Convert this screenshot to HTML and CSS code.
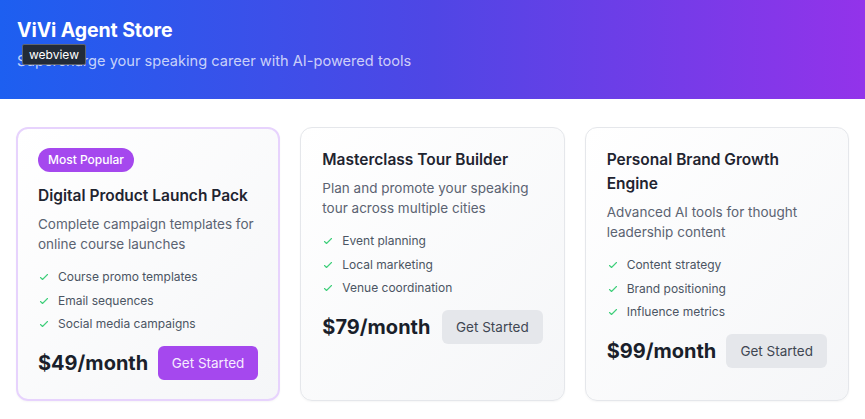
FILE: index.html
```html
<!DOCTYPE html>
<html lang="en">
<head>
<meta charset="utf-8">
<title>ViVi Agent Store</title>
<link rel="stylesheet" href="styles.css">
</head>
<body>
<header class="hero">
  <h1 class="hero-title">ViVi Agent Store</h1>
  <p class="hero-sub">Supercharge your speaking career with AI-powered tools</p>
  <span class="tooltip">webview</span>
</header>
<main class="grid">
  <div class="card card-featured">
    <span class="badge">Most Popular</span>
    <h2 class="card-title">Digital Product Launch Pack</h2>
    <p class="card-desc">Complete campaign templates for online course launches</p>
    <ul class="features">
      <li><svg class="check" viewBox="0 0 24 24"><path d="M5 13l4 4L19 7"/></svg>Course promo templates</li>
      <li><svg class="check" viewBox="0 0 24 24"><path d="M5 13l4 4L19 7"/></svg>Email sequences</li>
      <li><svg class="check" viewBox="0 0 24 24"><path d="M5 13l4 4L19 7"/></svg>Social media campaigns</li>
    </ul>
    <div class="card-foot">
      <span class="price">$49/month</span>
      <button class="btn btn-primary">Get Started</button>
    </div>
  </div>
  <div class="card">
    <h2 class="card-title">Masterclass Tour Builder</h2>
    <p class="card-desc">Plan and promote your speaking tour across multiple cities</p>
    <ul class="features">
      <li><svg class="check" viewBox="0 0 24 24"><path d="M5 13l4 4L19 7"/></svg>Event planning</li>
      <li><svg class="check" viewBox="0 0 24 24"><path d="M5 13l4 4L19 7"/></svg>Local marketing</li>
      <li><svg class="check" viewBox="0 0 24 24"><path d="M5 13l4 4L19 7"/></svg>Venue coordination</li>
    </ul>
    <div class="card-foot">
      <span class="price">$79/month</span>
      <button class="btn">Get Started</button>
    </div>
  </div>
  <div class="card">
    <h2 class="card-title">Personal Brand Growth Engine</h2>
    <p class="card-desc">Advanced AI tools for thought leadership content</p>
    <ul class="features">
      <li><svg class="check" viewBox="0 0 24 24"><path d="M5 13l4 4L19 7"/></svg>Content strategy</li>
      <li><svg class="check" viewBox="0 0 24 24"><path d="M5 13l4 4L19 7"/></svg>Brand positioning</li>
      <li><svg class="check" viewBox="0 0 24 24"><path d="M5 13l4 4L19 7"/></svg>Influence metrics</li>
    </ul>
    <div class="card-foot">
      <span class="price">$99/month</span>
      <button class="btn">Get Started</button>
    </div>
  </div>
</main>
</body>
</html>
```
FILE: styles.css
```css
* { box-sizing: border-box; }
html, body { margin: 0; padding: 0; background: #ffffff; }
body {
  font-family: Inter, "Noto Sans", "Liberation Sans", sans-serif;
  color: #111827;
  -webkit-font-smoothing: antialiased;
}
.hero {
  position: relative;
  height: 99px;
  padding: 16px 16px 0 17px;
  background: linear-gradient(90deg, #1d5ff0 0%, #4f46e5 50%, #9333ea 100%);
  color: #ffffff;
}
.hero-title {
  margin: 0;
  font-size: 19.5px;
  line-height: 28px;
  font-weight: 700;
  letter-spacing: -0.1px;
}
.hero-sub {
  margin: 5px 0 0;
  font-size: 14.6px;
  line-height: 24px;
  color: rgba(255, 255, 255, 0.74);
}
.tooltip {
  position: absolute;
  left: 22px;
  top: 44px;
  height: 21px;
  padding: 0 6px;
  background: #222b38;
  border: 1px solid #5e6572;
  border-radius: 2px;
  color: #ffffff;
  font-size: 12px;
  line-height: 19px;
}
.grid {
  display: grid;
  grid-template-columns: repeat(3, 1fr);
  gap: 20px;
  padding: 28px 16px 16px;
}
.card {
  display: flex;
  flex-direction: column;
  align-items: flex-start;
  padding: 20px 21px;
  border: 1px solid #e5e7eb;
  border-radius: 12px;
  background: linear-gradient(135deg, #ffffff 0%, #f5f6f8 100%);
  box-shadow: 0 1px 2px rgba(0, 0, 0, 0.04);
}
.card-featured {
  border: 2px solid #e7d3fd;
  padding: 19px 20px;
}
.badge {
  display: inline-block;
  height: 24px;
  padding: 0 10px;
  border-radius: 999px;
  background: #a548ee;
  color: #ffffff;
  font-size: 12px;
  font-weight: 500;
  line-height: 24px;
  margin-bottom: 12px;
}
.card-title {
  margin: 0 0 6px;
  font-size: 15.5px;
  line-height: 24px;
  font-weight: 600;
  color: #1f2430;
}
.card-desc {
  margin: 0 0 15px;
  font-size: 13.5px;
  line-height: 20px;
  color: #5b6372;
}
.features {
  list-style: none;
  margin: 0 0 14px;
  padding: 0;
  display: flex;
  flex-direction: column;
  gap: 7.5px;
}
.features li {
  display: flex;
  align-items: center;
  gap: 8px;
  font-size: 12px;
  line-height: 16px;
  color: #4b5563;
}
.check {
  width: 12px;
  height: 12px;
  fill: none;
  stroke: #3fcf7a;
  stroke-width: 2.2;
  stroke-linecap: round;
  stroke-linejoin: round;
}
.card-foot {
  align-self: stretch;
  display: flex;
  align-items: center;
  justify-content: space-between;
}
.price {
  font-size: 20px;
  font-weight: 700;
  line-height: 28px;
  color: #1a1f2b;
}
.btn {
  font-family: inherit;
  font-size: 13.5px;
  line-height: 18px;
  padding: 8px 14px;
  border: none;
  border-radius: 6px;
  background: #e5e7eb;
  color: #404652;
}
.btn-primary {
  background: #a548ee;
  color: #f6ecff;
}
```
